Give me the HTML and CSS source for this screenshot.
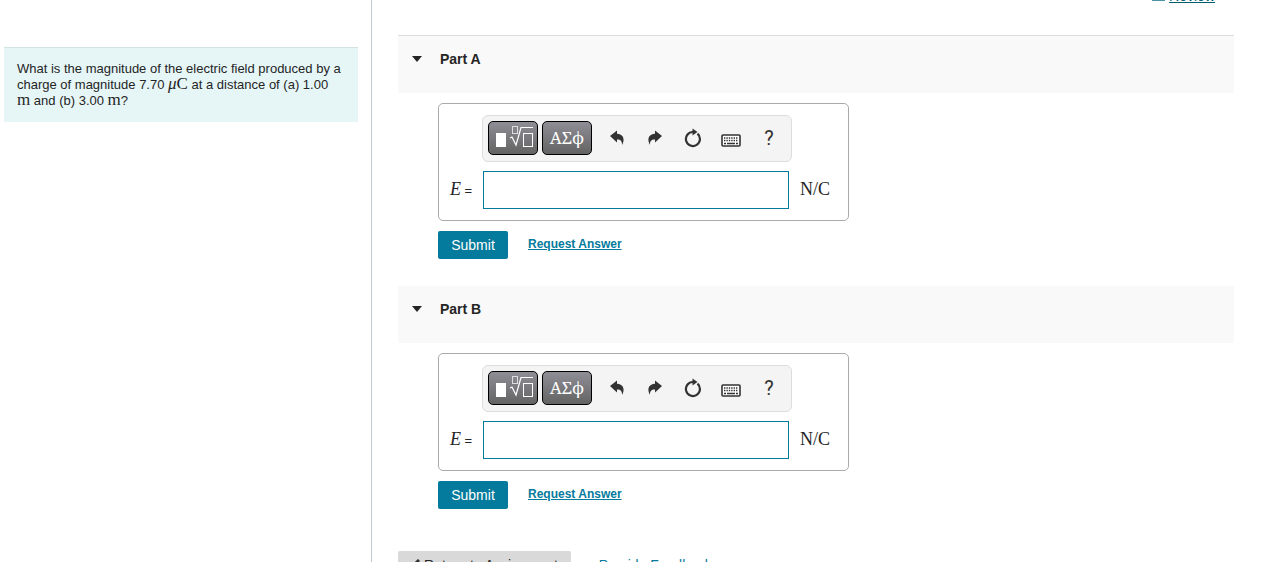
FILE: index.html
```html
<!DOCTYPE html>
<html lang="en">

<head>
    <meta charset="UTF-8">
    <meta name="viewport" content="width=device-width, initial-scale=1.0">
    <title>Electric Field</title>
    <link rel="stylesheet" href="styles.css">
</head>

<body>
    <!-- Shared toolbar icons -->
    <svg class="icon-defs" aria-hidden="true">
        <symbol id="icon-templates" viewBox="0 0 40 24">
            <rect x="3" y="8" width="10" height="14" fill="#fff" />
            <rect x="19.5" y="1.5" width="5" height="7" fill="none" stroke="#ddd" />
            <path d="M17 13l2-1 4 8 5-17.5h13" fill="none" stroke="#fff" stroke-width="1.2" />
            <rect x="30.5" y="8.5" width="9" height="13" fill="none" stroke="#fff" />
        </symbol>
        <symbol id="icon-undo" viewBox="0 0 16 16">
            <path d="M1 6l7-5.500v3.200c5 .3 7 3.300 6.500 7.300-.2 1.500-.7 2.800-1.500 4 .2-3.500-1-5.500-5-5.500v3z" fill="#333" />
        </symbol>
        <symbol id="icon-redo" viewBox="0 0 16 16">
            <path d="M15 6L8 .500v3.200C3 4 1 7 1.500 11c.2 1.500.7 2.800 1.500 4-.2-3.500 1-5.500 5-5.500v3z" fill="#333" />
        </symbol>
        <symbol id="icon-reset" viewBox="0 0 18 20">
            <path d="M13.500 5.700A7 7 0 1 1 9 4" fill="none" stroke="#333" stroke-width="2.200" />
            <path d="M8.500 .500l5 3.500-5 3.500z" fill="#333" />
        </symbol>
        <symbol id="icon-keyboard" viewBox="0 0 20 13">
            <rect x="1" y="1" width="18" height="11" rx="1" fill="#fff" stroke="#333" stroke-width="1.600" />
            <path d="M3 4h14M3 6.500h14" stroke="#333" stroke-width="1.400" stroke-dasharray="1.400 1" />
            <path d="M3 9.500h2M6 9.500h8M15 9.500h2" stroke="#333" stroke-width="1.400" />
        </symbol>
    </svg>

    <div class="page">
        <aside class="sidebar">
            <div class="question">
                What is the magnitude of the electric field produced by a charge of magnitude 7.70
                <span class="math"><i>μ</i>C</span> at a distance of (a) 1.00 <span class="math">m</span> and (b) 3.00
                <span class="math">m</span>?
            </div>
        </aside>

        <main class="content">
            <div class="review-bar">
                <svg class="review-icon" viewBox="0 0 13 13" aria-hidden="true">
                    <rect width="13" height="13" fill="#4b93a5" />
                </svg>
                <a href="#">Review</a>
            </div>

            <section class="part">
                <h2 class="part-header"><span class="arrow"></span>Part A</h2>
                <form class="part-body">
                    <div class="answer-box">
                        <div class="toolbar">
                            <button type="button" class="palette" aria-label="Templates"><svg class="templates"><use href="#icon-templates" /></svg></button>
                            <button type="button" class="palette">ΑΣϕ</button>
                            <div class="tools">
                                <button type="button" class="tool" aria-label="Undo"><svg width="16" height="16"><use href="#icon-undo" /></svg></button>
                                <button type="button" class="tool" aria-label="Redo"><svg width="16" height="16"><use href="#icon-redo" /></svg></button>
                                <button type="button" class="tool" aria-label="Reset"><svg width="18" height="20"><use href="#icon-reset" /></svg></button>
                                <button type="button" class="tool keyboard" aria-label="Keyboard"><svg width="20" height="13"><use href="#icon-keyboard" /></svg></button>
                                <button type="button" class="tool help">?</button>
                            </div>
                        </div>
                        <label for="answer-a"><i>E</i> =</label>
                        <input type="text" id="answer-a" name="answer-a">
                        <span class="unit">N/C</span>
                    </div>
                    <div class="actions">
                        <button type="submit" class="submit">Submit</button>
                        <a href="#">Request Answer</a>
                    </div>
                </form>
            </section>

            <section class="part">
                <h2 class="part-header"><span class="arrow"></span>Part B</h2>
                <form class="part-body">
                    <div class="answer-box">
                        <div class="toolbar">
                            <button type="button" class="palette" aria-label="Templates"><svg class="templates"><use href="#icon-templates" /></svg></button>
                            <button type="button" class="palette">ΑΣϕ</button>
                            <div class="tools">
                                <button type="button" class="tool" aria-label="Undo"><svg width="16" height="16"><use href="#icon-undo" /></svg></button>
                                <button type="button" class="tool" aria-label="Redo"><svg width="16" height="16"><use href="#icon-redo" /></svg></button>
                                <button type="button" class="tool" aria-label="Reset"><svg width="18" height="20"><use href="#icon-reset" /></svg></button>
                                <button type="button" class="tool keyboard" aria-label="Keyboard"><svg width="20" height="13"><use href="#icon-keyboard" /></svg></button>
                                <button type="button" class="tool help">?</button>
                            </div>
                        </div>
                        <label for="answer-b"><i>E</i> =</label>
                        <input type="text" id="answer-b" name="answer-b">
                        <span class="unit">N/C</span>
                    </div>
                    <div class="actions">
                        <button type="submit" class="submit">Submit</button>
                        <a href="#">Request Answer</a>
                    </div>
                </form>
            </section>

            <div class="footer">
                <button type="button" class="return">
                    <svg width="8" height="12" viewBox="0 0 8 12" aria-hidden="true">
                        <path d="M7 1L2 6l5 5" fill="none" stroke="#333" stroke-width="3" />
                    </svg>
                    Return to Assignment
                </button>
                <a href="#">Provide Feedback</a>
            </div>
        </main>
    </div>
</body>

</html>
```

FILE: styles.css
```css
* {
    box-sizing: border-box;
}

body {
    margin: 0;
    background-color: #fff;
    color: #252525;
    font-family: "Liberation Sans", Arial, sans-serif;
    font-size: 14px;
}

a {
    color: #047a9c;
}

button {
    font-family: inherit;
    cursor: pointer;
}

.icon-defs {
    display: none;
}

.page {
    display: flex;
    height: 100vh;
    overflow: hidden;
}

/* Question */
.sidebar {
    flex: 0 0 372px;
    padding: 47px 13px 0 4px;
    border-right: 1px solid #c3c9d0;
}

.question {
    padding: 13px 16px 13px 13px;
    border-top: 1px solid #d3e3e3;
    background-color: #e6f6f7;
    font-size: 13px;
    line-height: 16px;
}

.math {
    font-family: "Liberation Serif", "Times New Roman", serif;
    font-size: 17px;
    line-height: 0;
}

/* Parts */
.content {
    flex: 1;
    padding: 0 30px 0 26px;
}

.review-bar {
    display: flex;
    justify-content: flex-end;
    gap: 4px;
    height: 16px;
    margin: -12px 19px 31px 0;
    line-height: 16px;
}

.review-bar a {
    color: #005a70;
}

.review-icon {
    width: 13px;
    height: 13px;
}

.part-header {
    display: flex;
    align-items: flex-start;
    gap: 18px;
    height: 57px;
    margin: 0;
    padding: 15px 14px;
    background-color: #f9f9f9;
    font-size: 14px;
    line-height: 16px;
}

.part:nth-of-type(1) .part-header {
    height: 58px;
    border-top: 1px solid #ddd;
}

.arrow {
    margin-top: 5px;
    border: 5px solid transparent;
    border-top: 6px solid #252525;
    border-bottom: 0;
}

.part-body {
    padding: 10px 40px 27px;
}

.answer-box {
    display: grid;
    grid-template-columns: 22px 306px auto;
    align-items: center;
    column-gap: 11px;
    row-gap: 9px;
    width: fit-content;
    padding: 11px 18px 11px 11px;
    border: 1px solid #aaa;
    border-radius: 5px;
}

.toolbar {
    grid-column: 2;
    display: flex;
    gap: 4px;
    width: 310px;
    margin-left: -1px;
    padding: 5px 3px 6px 5px;
    border: 1px solid #ddd;
    border-radius: 6px;
    background-color: #f4f4f4;
}

.palette {
    width: 50px;
    height: 34px;
    padding: 0 0 2px;
    border: 1px solid #000;
    border-radius: 5px;
    background: linear-gradient(#8f8e96, #636363);
    color: #fff;
    font-family: "Noto Serif", "Liberation Serif", serif;
    font-size: 17px;
}

.templates {
    display: block;
    width: 40px;
    height: 24px;
    margin: 0 auto;
}

.tools {
    display: flex;
    padding-left: 2px;
}

.tool {
    display: flex;
    align-items: center;
    justify-content: center;
    width: 38px;
    padding: 0;
    border: 0;
    background: none;
    color: #333;
}

.keyboard {
    padding-top: 4px;
}

.help {
    font-family: Roboto, sans-serif;
    font-size: 20px;
}

.answer-box label {
    grid-column: 1;
    padding-bottom: 2px;
    font-size: 13px;
    white-space: nowrap;
}

.answer-box label i,
.unit {
    font-family: "Liberation Serif", "Times New Roman", serif;
    font-size: 18px;
}

.unit {
    padding-bottom: 2px;
}

.answer-box input {
    width: 100%;
    height: 38px;
    padding: 4px 8px;
    border: 1px solid #047a9c;
    background-color: #fff;
    font-size: 16px;
}

.actions {
    display: flex;
    align-items: center;
    gap: 20px;
    margin-top: 10px;
}

.actions a {
    padding-bottom: 2px;
    font-size: 12px;
    font-weight: bold;
}

.submit {
    width: 70px;
    height: 28px;
    padding: 0;
    border: 0;
    border-radius: 2px;
    background-color: #047a9c;
    color: #fff;
    font-size: 14px;
}

/* Footer */
.footer {
    display: flex;
    align-items: center;
    gap: 28px;
    padding-top: 15px;
}

.return {
    display: flex;
    align-items: center;
    gap: 4px;
    height: 28px;
    padding: 0 13px 0 14px;
    border: 0;
    border-radius: 2px;
    background-color: #d9d9d9;
    color: #252525;
    font-size: 14px;
}

.footer a {
    text-decoration: none;
}
```
